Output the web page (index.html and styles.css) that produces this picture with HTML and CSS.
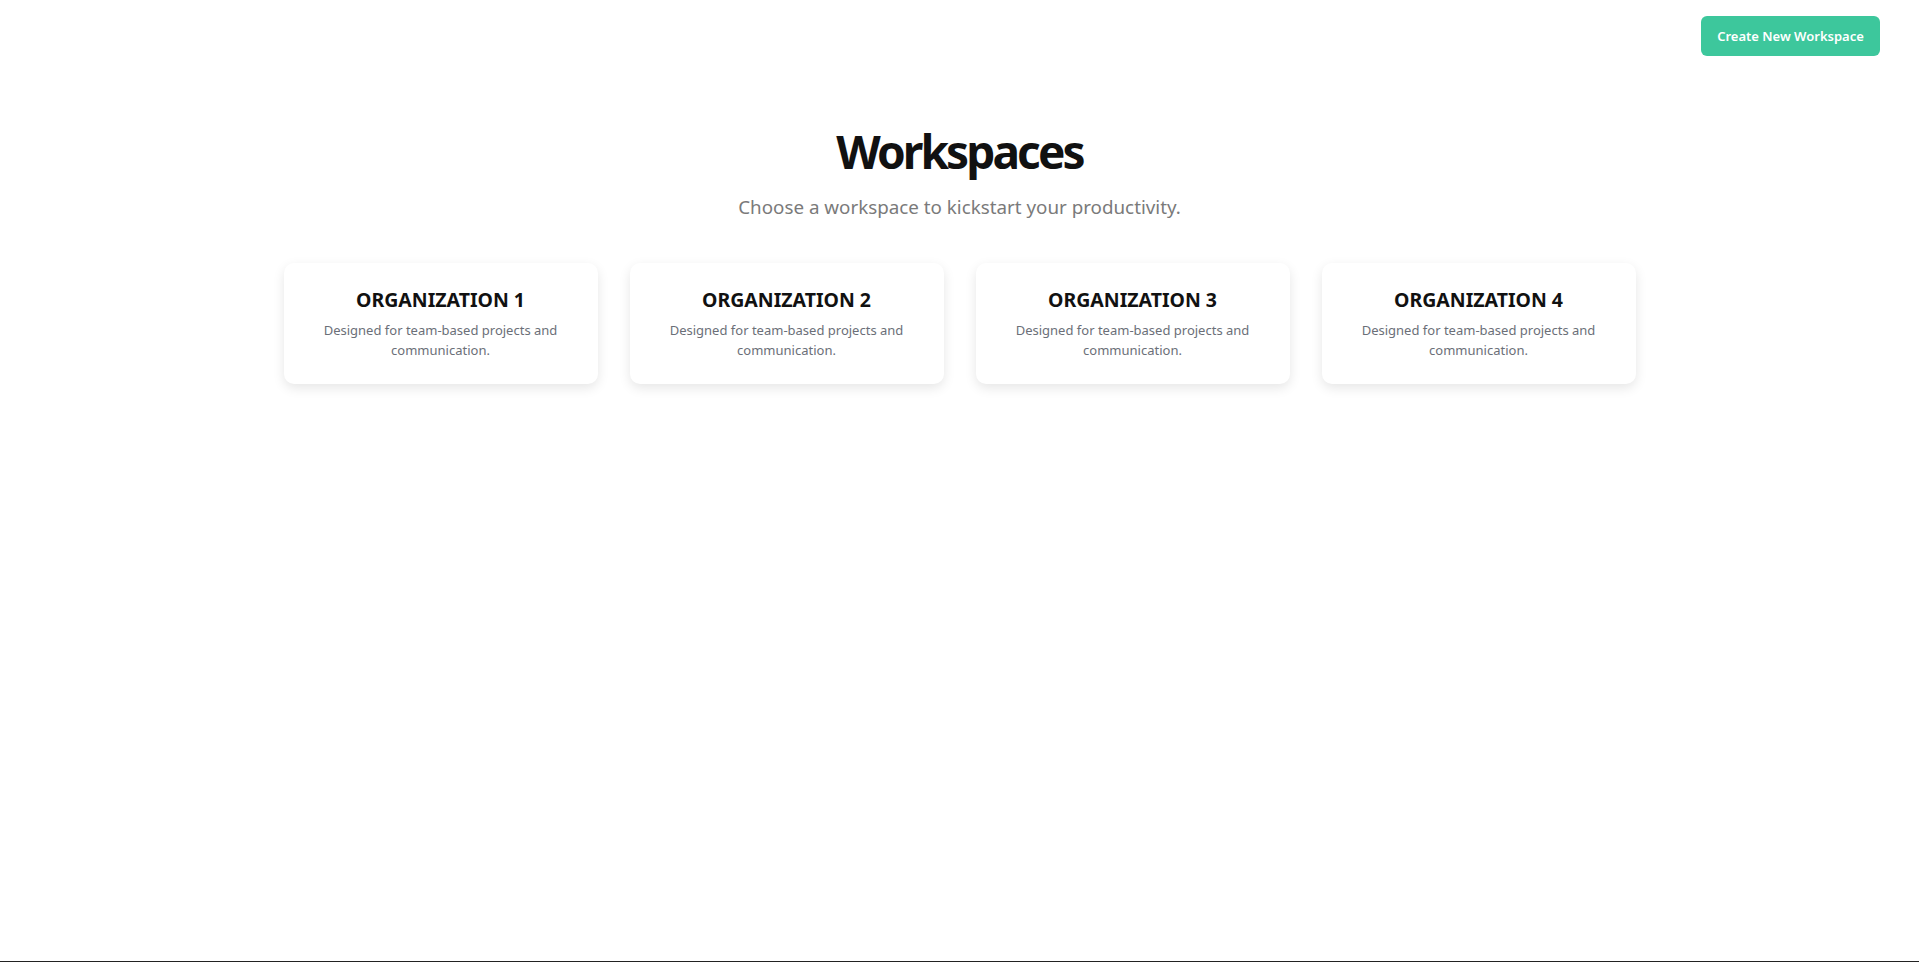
FILE: index.html
```html
<!DOCTYPE html>
<html lang="en">
<head>
<meta charset="utf-8">
<title>Workspaces</title>
<link rel="stylesheet" href="styles.css">
</head>
<body>
<div class="page">
  <header class="topbar">
    <button class="create-btn">Create New Workspace</button>
  </header>
  <main class="main">
    <h1 class="title">Workspaces</h1>
    <p class="subtitle">Choose a workspace to kickstart your productivity.</p>
    <div class="cards">
      <div class="card">
        <h2 class="card-title">ORGANIZATION 1</h2>
        <p class="card-desc">Designed for team-based projects and communication.</p>
      </div>
      <div class="card">
        <h2 class="card-title">ORGANIZATION 2</h2>
        <p class="card-desc">Designed for team-based projects and communication.</p>
      </div>
      <div class="card">
        <h2 class="card-title">ORGANIZATION 3</h2>
        <p class="card-desc">Designed for team-based projects and communication.</p>
      </div>
      <div class="card">
        <h2 class="card-title">ORGANIZATION 4</h2>
        <p class="card-desc">Designed for team-based projects and communication.</p>
      </div>
    </div>
  </main>
</div>
</body>
</html>
```
FILE: styles.css
```css
* { box-sizing: border-box; }
html, body { margin: 0; padding: 0; background: #fff; }
body {
  font-family: "Noto Sans", "Open Sans", sans-serif;
  color: #111;
}
.page {
  height: 962px;
  border-bottom: 1px solid #222;
  display: flex;
  flex-direction: column;
}
.topbar {
  display: flex;
  justify-content: flex-end;
  padding: 16px 39px 0 0;
}
.create-btn {
  width: 179px;
  height: 40px;
  border: none;
  border-radius: 6px;
  background: #3dc79c;
  color: #fff;
  font-family: inherit;
  font-size: 13px;
  font-weight: 600;
  cursor: pointer;
}
.main {
  display: flex;
  flex-direction: column;
  align-items: center;
  padding-top: 63px;
}
.title {
  margin: 0;
  font-size: 46px;
  line-height: 64px;
  font-weight: 700;
  letter-spacing: -2.9px;
  color: #111;
}
.subtitle {
  margin: 11px 0 0;
  font-size: 18.8px;
  line-height: 26px;
  color: #7a7a7a;
}
.cards {
  display: grid;
  grid-template-columns: repeat(4, 314px);
  gap: 32px;
  margin-top: 43px;
}
.card {
  background: #fff;
  border-radius: 10px;
  box-shadow: 0 4px 12px rgba(0, 0, 0, 0.1);
  padding: 24px 24px 24px;
  text-align: center;
}
.card-title {
  margin: 0;
  font-size: 19.5px;
  line-height: 25px;
  font-weight: 700;
  color: #111;
}
.card-desc {
  margin: 8px 0 0;
  font-size: 13px;
  line-height: 20px;
  color: #6b6f78;
}
```
